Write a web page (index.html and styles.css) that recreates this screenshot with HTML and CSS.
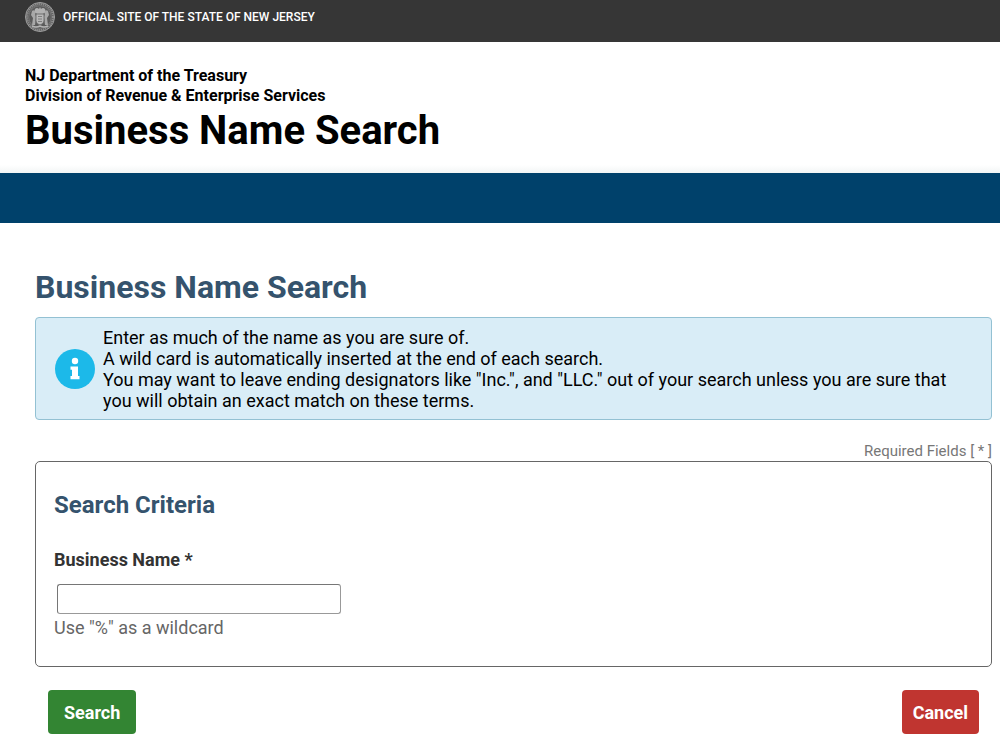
FILE: index.html
```html
<!DOCTYPE html>
<html lang="en">

<head>
    <meta charset="UTF-8">
    <meta name="viewport" content="width=device-width, initial-scale=1.0">
    <title>Business Name Search</title>
    <link rel="stylesheet" href="styles.css">
</head>

<body>
    <div class="state-bar">
        <!-- State seal -->
        <svg class="seal" viewBox="0 0 32 32" aria-hidden="true">
            <circle cx="16" cy="16" r="14.5" fill="#5c5c5c" stroke="#a0a0a0"/>
            <circle cx="16" cy="16" r="13" fill="none" stroke="#8e8e8e" stroke-width="2" stroke-dasharray="1.2 .8"/>
            <circle cx="16" cy="16" r="11.3" fill="#5a5a5a" stroke="#8a8a8a" stroke-width=".6"/>
            <!-- horse head and helmet -->
            <path d="M11 8q2-2 4 0l1-2 1 2q2-2 4 0l1 3-3 2h-6l-3-2z" fill="#b2b2b2"/>
            <!-- figures on both sides -->
            <path d="M8 10q2-2 3 1l1 5-1 8H8l1-7-2-3zM24 10q-2-2-3 1l-1 5 1 8h3l-1-7 2-3z" fill="#a8a8a8"/>
            <!-- shield -->
            <path d="M12 13h8v7q0 3-4 4q-4-1-4-4z" fill="#b8b8b8" stroke="#505050" stroke-width=".7"/>
            <path d="M14 15.500h4M14 18h4M14 20.500h4" stroke="#6e6e6e" stroke-width=".8"/>
            <!-- ribbon -->
            <path d="M8 25q4 2 8 0q4 2 8 0" fill="none" stroke="#b5b5b5" stroke-width="1.500"/>
        </svg>
        <span>OFFICIAL SITE OF THE STATE OF NEW JERSEY</span>
    </div>

    <header class="site-header">
        <p>NJ Department of the Treasury</p>
        <p>Division of Revenue &amp; Enterprise Services</p>
        <h1>Business Name Search</h1>
    </header>

    <nav class="nav-bar"></nav>

    <main class="content">
        <h2>Business Name Search</h2>
        <div class="info">
            <svg class="info-icon" viewBox="0 0 40 40" aria-hidden="true">
                <circle cx="20" cy="20" r="20" fill="#1cb9e9"/>
                <circle cx="20" cy="12" r="3.200" fill="#fff"/>
                <path d="M16 17.500h7v9.500h1.500v3.200h-9V27H17v-6.300h-1.500V17.500z" fill="#fff"/>
            </svg>
            <p>Enter as much of the name as you are sure of.<br>
                A wild card is automatically inserted at the end of each search.<br>
                You may want to leave ending designators like "Inc.", and "LLC." out of your search unless you are sure that you will obtain an exact match on these terms.</p>
        </div>

        <form>
            <p class="required">Required Fields [ * ]</p>
            <div class="criteria">
                <h3>Search Criteria</h3>
                <label for="businessName">Business Name *</label>
                <input type="text" id="businessName" name="businessName">
                <p class="hint">Use "%" as a wildcard</p>
            </div>
            <div class="buttons">
                <button type="submit" class="btn btn-search">Search</button>
                <button type="button" class="btn btn-cancel">Cancel</button>
            </div>
        </form>
    </main>
</body>

</html>
```
FILE: styles.css
```css
* {
    box-sizing: border-box;
}

body {
    margin: 0;
    font-family: Roboto, sans-serif;
    font-size: 18px;
    color: #000;
    background: #fff;
}

h1, h2, h3, p {
    margin: 0;
}

.state-bar {
    display: flex;
    align-items: center;
    gap: 7px;
    height: 42px;
    padding: 0 24px 8px;
    background: #363636;
    color: #fff;
    font-size: 12px;
    font-weight: 500;
    line-height: 16px;
}

.seal {
    width: 32px;
    height: 32px;
}

.site-header {
    padding: 24px 25px 17px;
    background: linear-gradient(to top, #f2f5f5, #fff 8px);
}

.site-header p {
    font-size: 16px;
    font-weight: 700;
    line-height: 20px;
}

.site-header h1 {
    font-size: 40px;
    font-weight: 700;
    line-height: 50px;
}

.nav-bar {
    height: 50px;
    background: #00416b;
}

.content {
    padding: 44px 8px 16px 35px;
}

.content h2 {
    color: #35536d;
    font-size: 32px;
    font-weight: 700;
    line-height: 40px;
    margin-bottom: 10px;
}

.info {
    display: flex;
    align-items: center;
    gap: 8px;
    padding: 9px 19px 8px;
    background: #d9edf7;
    border: 1px solid #93c1d3;
    border-radius: 4px;
}

.info p {
    font-size: 18px;
    line-height: 21px;
}

.info-icon {
    flex: none;
    width: 40px;
    height: 40px;
}

.required {
    margin-top: 21px;
    color: #777;
    font-size: 15px;
    line-height: 20px;
    text-align: right;
}

.criteria {
    padding: 27px 18px 28px;
    border: 1px solid #666;
    border-radius: 5px;
}

.criteria h3 {
    color: #35536d;
    font-size: 24px;
    font-weight: 700;
    line-height: 32px;
    margin-bottom: 28px;
}

.criteria label {
    display: block;
    color: #333;
    font-weight: 700;
    line-height: 22px;
    margin-bottom: 13px;
}

.criteria input {
    display: block;
    width: 284px;
    height: 30px;
    margin: 0 3px 4px;
    border: 1px solid;
    border-color: #767676 #999 #999 #767676;
    border-radius: 3px;
    font: inherit;
}

.hint {
    color: #666;
    line-height: 20px;
}

.buttons {
    display: flex;
    justify-content: space-between;
    padding: 23px 13px 0;
}

.btn {
    height: 44px;
    border: 0;
    border-radius: 4px;
    color: #fff;
    font: 700 18px Roboto, sans-serif;
    cursor: pointer;
}

.btn-search {
    padding: 0 16px;
    background: #338533;
}

.btn-cancel {
    padding: 0 11px;
    background: #c03530;
}
```
